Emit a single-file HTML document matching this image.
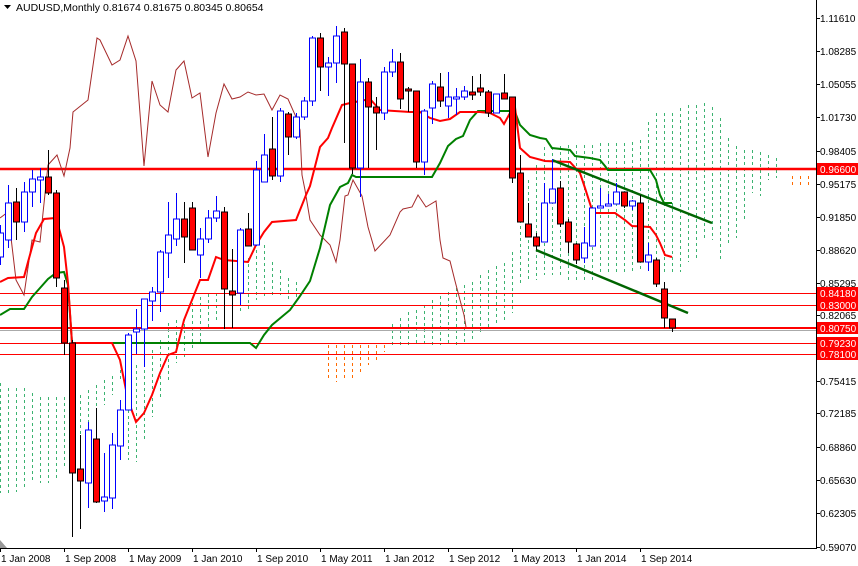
<!DOCTYPE html>
<html><head><meta charset="utf-8"><style>
html,body{margin:0;padding:0;background:#fff;}
body{width:858px;height:566px;overflow:hidden;position:relative;font-family:"Liberation Sans",sans-serif;}
svg{position:absolute;left:0;top:0;}
svg text{font-family:"Liberation Sans",sans-serif;font-size:10px;fill:#000;}
</style></head><body>
<svg id="c" width="858" height="566" viewBox="0 0 858 566" xmlns="http://www.w3.org/2000/svg">
<g id="cloud"></g>
<!-- horizontal levels -->
<line x1="0" y1="169" x2="816" y2="169" stroke="#f00" stroke-width="2.5"/>
<line x1="0" y1="293.5" x2="816" y2="293.5" stroke="#f00" stroke-width="1"/>
<line x1="0" y1="305.5" x2="816" y2="305.5" stroke="#f00" stroke-width="1"/>
<line x1="0" y1="330.5" x2="816" y2="330.5" stroke="#aaa" stroke-width="1"/>
<line x1="0" y1="328" x2="816" y2="328" stroke="#f00" stroke-width="2"/>
<line x1="0" y1="343.5" x2="816" y2="343.5" stroke="#f00" stroke-width="1"/>
<line x1="0" y1="354.5" x2="816" y2="354.5" stroke="#f00" stroke-width="1"/>
<!-- chikou -->
<polyline fill="none" stroke="#a52a2a" stroke-width="1" points="0,218 8,212 16,280 24,295 32,240 40,242 48,165 57,155 64,176 70,148 73,112 88,100 97,38 100,40 112,65 120,60 128,36 136,61 144,166 152,81 160,105 168,112 176,70 184,61 192,98 200,93 208,157 216,113 224,84 232,99 240,97 248,92 256,95 264,94 272,110 280,95 288,99 296,117 300,130 302,175 305,190 310,220 320,235 330,245 336,262 340,240 345,196 348,195 353,180 362,196 368,227 375,251 390,235 400,212 403,209 412,207 418,195 426,207 436,201 440,240 443,258 450,261 455,281 460,300 464,315 466,327"/>
<!-- kijun green -->
<polyline fill="none" stroke="#008000" stroke-width="2" points="0,315 10,309 24,309 32,297 40,288 48,279 56,273 64,272 68,285 72,343 250,343 256,348 264,335 272,325 290,310 300,296 310,281 320,248 330,205 340,187 348,183 352,175 356,177 432,177 440,163 448,146 456,139 463,136 470,120 478,111 510,111 515,112 520,125 530,135 540,138 546,139 552,148 570,150 575,156 590,158 600,160 605,166 608,170 650,170 656,180 660,195 664,203 672,203"/>
<!-- tenkan red -->
<polyline fill="none" stroke="#f00" stroke-width="2" points="0,282 8,278 24,277 28,262 36,233 44,219 56,218 60,232 64,247 68,283 72,343 112,343 120,360 128,400 136,422 144,413 152,395 160,373 168,355 176,352 184,320 192,300 200,280 208,280 216,257 224,260 248,262 256,245 264,232 272,222 296,220 306,195 310,186 320,147 328,138 332,128 342,105 350,103 370,99 380,110 410,112 420,112 430,118 440,121 450,119 460,112 480,112 490,113 500,118 504,124 510,113 514,99 520,148 530,157 545,161 570,162 580,173 585,188 593,213 615,213 625,220 632,226 650,227 656,235 660,243 665,255 672,257"/>
<!-- trendlines -->
<line x1="552" y1="160" x2="712" y2="223" stroke="#006400" stroke-width="2.5"/>
<line x1="536" y1="250" x2="688" y2="313" stroke="#006400" stroke-width="2.5"/>
<g id="candles"></g>
<!-- axes -->
<line x1="816.5" y1="0" x2="816.5" y2="548" stroke="#000"/>
<line x1="0" y1="548.5" x2="817" y2="548.5" stroke="#000"/>
<polygon points="0,540 0,548 7,548" fill="#999"/>
<g id="ticks" stroke="#000"></g>
<g>
<text x="820" y="22">1.11610</text>
<text x="820" y="55">1.08285</text>
<text x="820" y="88">1.05055</text>
<text x="820" y="121">1.01730</text>
<text x="820" y="155">0.98405</text>
<text x="820" y="188">0.95175</text>
<text x="820" y="221">0.91850</text>
<text x="820" y="254">0.88620</text>
<text x="820" y="287">0.85295</text>
<text x="820" y="319">0.82065</text>
<text x="820" y="385">0.75415</text>
<text x="820" y="417">0.72185</text>
<text x="820" y="451">0.68860</text>
<text x="820" y="484">0.65630</text>
<text x="820" y="517">0.62305</text>
<text x="820" y="551">0.59070</text>
</g>
<g>
<rect x="817" y="163" width="41" height="12" fill="#f00"/><text x="820" y="173" style="fill:#fff">0.96600</text>
<rect x="817" y="287" width="41" height="12" fill="#f00"/><text x="820" y="297" style="fill:#fff">0.84180</text>
<rect x="817" y="299" width="41" height="12" fill="#f00"/><text x="820" y="309" style="fill:#fff">0.83000</text>
<rect x="817" y="322" width="41" height="12" fill="#f00"/><text x="820" y="332" style="fill:#fff">0.80750</text>
<rect x="817" y="337" width="41" height="12" fill="#f00"/><text x="820" y="347" style="fill:#fff">0.79230</text>
<rect x="817" y="348" width="41" height="12" fill="#f00"/><text x="820" y="358" style="fill:#fff">0.78100</text>
</g>
<g>
<text x="1" y="562">1 Jan 2008</text>
<text x="65" y="562">1 Sep 2008</text>
<text x="129" y="562">1 May 2009</text>
<text x="193" y="562">1 Jan 2010</text>
<text x="257" y="562">1 Sep 2010</text>
<text x="321" y="562">1 May 2011</text>
<text x="385" y="562">1 Jan 2012</text>
<text x="449" y="562">1 Sep 2012</text>
<text x="513" y="562">1 May 2013</text>
<text x="577" y="562">1 Jan 2014</text>
<text x="641" y="562">1 Sep 2014</text>
</g>
<polygon points="4,5 11,5 7.5,9" fill="#000"/>
<text x="16" y="11" style="font-size:10.5px">AUDUSD,Monthly  0.81674 0.81675 0.80345 0.80654</text>
</svg>
<script>
var NS="http://www.w3.org/2000/svg";
function el(p,t,a){var e=document.createElementNS(NS,t);for(var k in a)e.setAttribute(k,a[k]);p.appendChild(e);return e;}
var C=[
["B",233,257,225,265],["B",203,240,185,248],["R",202,222,188,240],["B",192,222,182,232],["B",179,192,170,207],["B",177,180,168,203],["R",177,193,150,195],["R",193,278,190,287],["R",288,343,280,355],["R",343,473,340,537],
["R",469,481,435,529],["B",430,483,422,508],["R",439,502,408,503],["B",497,501,453,512],["B",445,498,433,509],["B",410,446,400,460],["B",335,410,333,410],["B",329,332,309,354],["B",299,329,299,367],["B",292,301,287,321],
["B",252,292,250,312],["B",235,253,202,278],["B",219,239,193,246],["R",219,237,202,263],["R",208,250,202,250],["B",239,255,228,278],["B",218,239,210,243],["B",211,218,196,222],["R",212,289,207,329],["R",291,295,249,328],
["B",230,293,228,305],["R",229,246,213,246],["B",170,245,161,246],["B",155,182,134,182],["R",149,176,117,180],["B",111,176,108,182],["R",114,137,112,155],["B",117,137,113,139],["B",101,117,97,120],["B",38,101,36,106],
["R",38,67,33,91],["B",63,67,57,96],["B",36,63,26,83],["R",32,64,28,143],["R",64,168,64,174],["B",82,168,59,197],["R",82,107,78,168],["R",107,113,97,150],["B",72,113,67,120],["B",62,72,49,77],
["R",62,99,53,109],["R",89,91,87,112],["R",91,162,91,168],["B",111,162,109,175],["B",84,108,81,124],["R",87,101,73,107],["B",97,106,72,118],["B",97,99,88,115],["B",91,97,86,100],["R",92,95,76,100],
["R",88,92,74,96],["R",92,113,90,117],["B",94,113,94,113],["R",93,99,74,99],["R",97,178,97,183],["R",173,222,155,222],["R",224,237,203,237],["R",237,246,233,250],["B",203,242,183,242],["B",189,203,159,203],
["R",188,224,181,227],["R",222,242,219,253],["R",244,260,243,264],["B",243,258,227,263],["B",208,246,207,246],["B",206,208,188,208],["B",204,206,194,206],["B",192,204,183,204],["R",192,206,192,208],["B",201,206,200,210],
["R",203,262,195,262],["B",255,262,243,271],["R",260,284,258,287],["R",289,318,282,328],["R",319,328,319,332]];
var g=document.getElementById("candles");
C.forEach(function(c,i){var x=8*i+0.5;var col=c[0]=="R"?"#000":"#00f";
el(g,"line",{x1:x,y1:c[3],x2:x,y2:c[4],stroke:col,"stroke-width":1});
el(g,"rect",{x:x-3,y:c[1],width:6,height:Math.max(1,c[2]-c[1]),fill:c[0]=="R"?"#f00":"#fff",stroke:col,"stroke-width":1});});
// cloud
var cl=[[0,383,493],[8,388,493],[16,388,492],[24,388,488],[32,393,483],[40,397,483],[48,397,483],[56,397,480],[64,397,467],[72,395,465],[80,395,440],[88,390,430],[96,385,418],[104,380,405],[112,376,395],
[120,370,380],[128,368,460],[136,365,462],[144,358,440],[152,350,417],[160,340,400],[168,323,383],[176,320,363],[184,318,360],[192,297,350],[200,297,345],[208,294,330],[216,293,323],[224,292,320],[232,290,317],[240,260,313],[248,258,310],[256,250,300],[264,245,297],[272,262,295],[280,270,295],[288,278,300],[296,282,300],
[392,324,345],[400,318,345],[408,312,345],[416,310,345],[424,305,345],[432,300,345],[440,296,345],[448,292,345],[456,288,345],[464,285,345],[472,282,340],[480,275,335],[488,270,330],[496,266,325],[504,263,320],[512,252,313],[520,190,284],[528,180,282],[536,165,280],[544,147,275],[552,147,275],[560,146,275],[568,145,280],[576,145,280],[584,145,280],[592,145,280],[600,143,275],[608,143,275],[616,143,275],[624,143,275],[632,142,272],[640,140,270],[648,122,263],[656,113,272],[664,113,272],[672,113,272],[680,108,272],[688,105,262],[696,105,260],[704,103,240],[712,107,240],[720,118,262],[728,138,245],[736,146,238],[744,150,220],[752,150,193],[760,152,196],[768,155,180],[776,158,178]];
var cg=document.getElementById("cloud");
cl.forEach(function(c){el(cg,"line",{x1:c[0]+0.5,y1:c[1],x2:c[0]+0.5,y2:c[2],stroke:"#3cb371","stroke-width":1,"stroke-dasharray":"3,3"});});
[[328,345,380],[336,345,382],[344,345,380],[352,345,378],[360,345,372],[368,345,365],[376,345,360],[384,345,352],[792,176,186],[800,176,186],[808,176,186]].forEach(function(c){el(cg,"line",{x1:c[0]+0.5,y1:c[1],x2:c[0]+0.5,y2:c[2],stroke:"#ff6a00","stroke-width":1,"stroke-dasharray":"3,3"});});
var tg=document.getElementById("ticks");
[18,51,84,117,151,184,217,250,283,315,381,413,447,480,513,547].forEach(function(y){el(tg,"line",{x1:816,y1:y+0.5,x2:820,y2:y+0.5});});
for(var i=0;i<11;i++){var x=64*i+0.5;el(tg,"line",{x1:x,y1:548,x2:x,y2:552});}
</script>
</body></html>
